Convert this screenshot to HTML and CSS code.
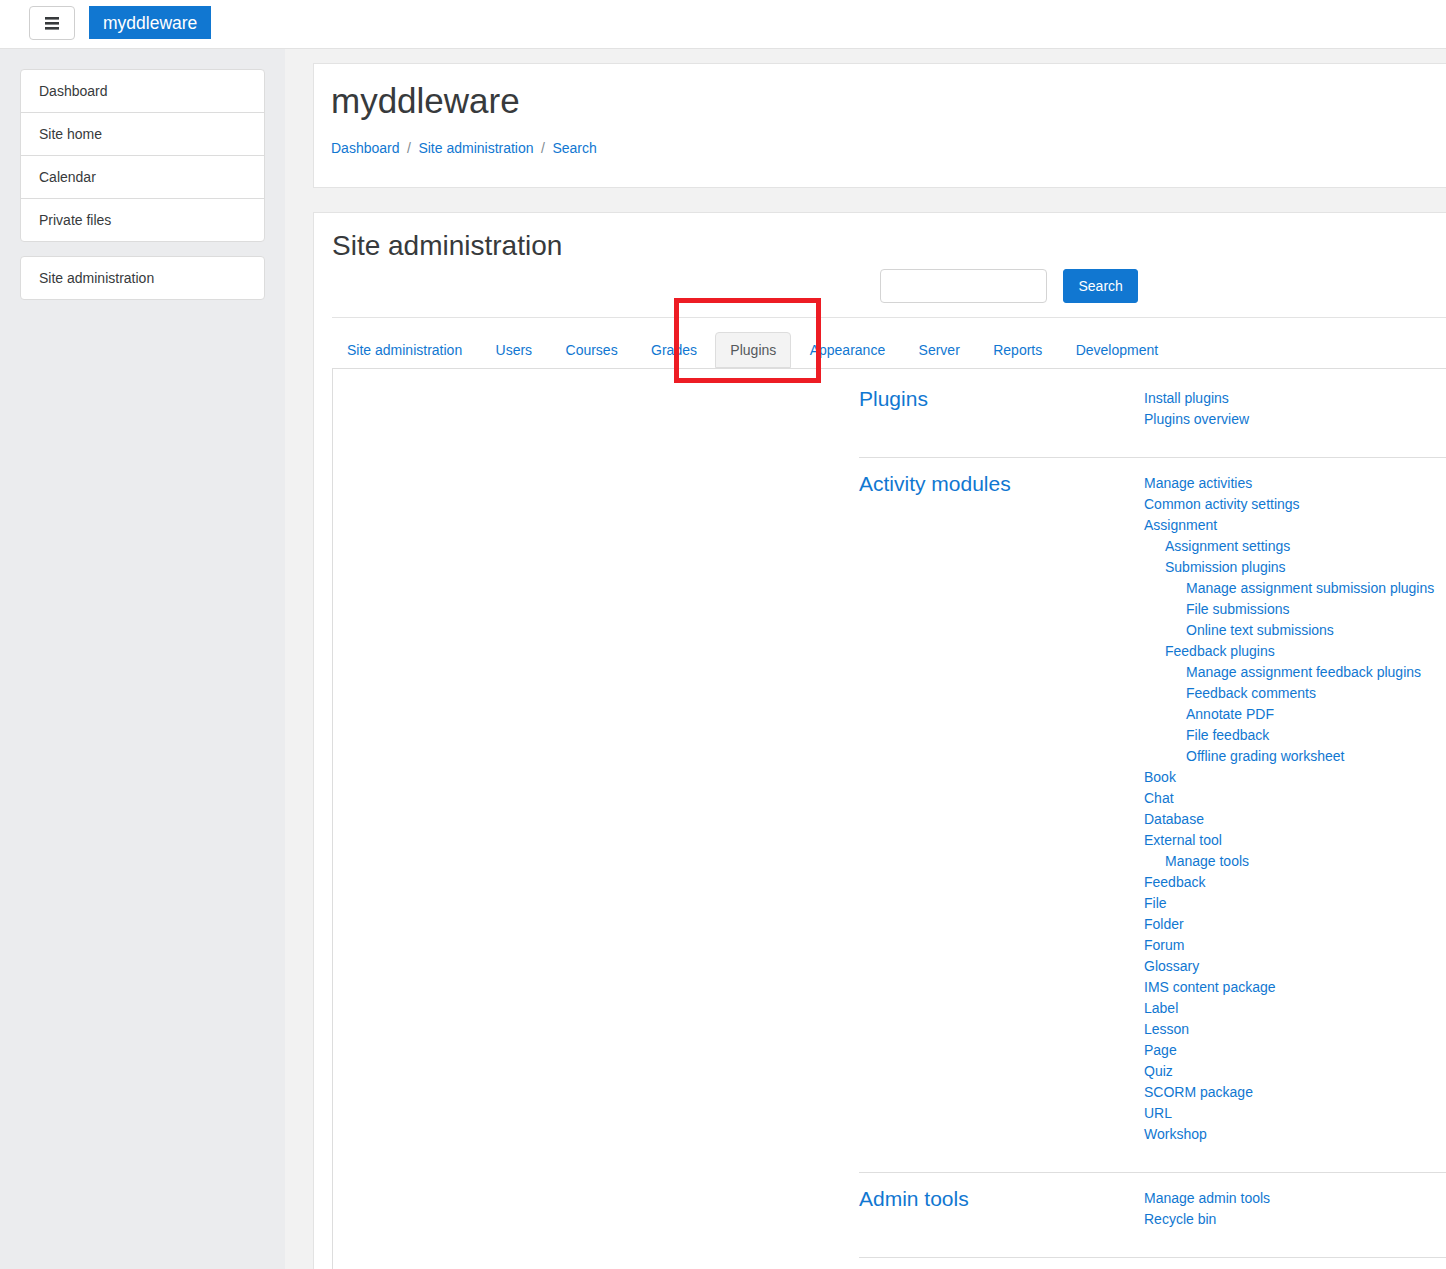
FILE: index.html
```html
<!DOCTYPE html>
<html lang="en">
<head>
<meta charset="utf-8">
<title>myddleware: Administration: Search</title>
<link rel="stylesheet" href="styles.css">
</head>
<body>
<header class="navbar">
  <button class="nav-toggle" type="button" aria-label="Side panel">
    <svg width="14" height="13" viewBox="0 0 14 13" aria-hidden="true">
      <rect x="0" y="0" width="14" height="2.6"></rect>
      <rect x="0" y="5" width="14" height="2.6"></rect>
      <rect x="0" y="10" width="14" height="2.6"></rect>
    </svg>
  </button>
  <a class="brand" href="#">myddleware</a>
</header>

<div class="page">
  <aside class="drawer">
    <nav class="block">
      <a class="block-item" href="#">Dashboard</a>
      <a class="block-item" href="#">Site home</a>
      <a class="block-item" href="#">Calendar</a>
      <a class="block-item" href="#">Private files</a>
    </nav>
    <nav class="block">
      <a class="block-item" href="#">Site administration</a>
    </nav>
  </aside>

  <main class="main">
    <section class="card page-header">
      <h1 class="page-title">myddleware</h1>
      <ol class="breadcrumb">
        <li><a href="#">Dashboard</a></li>
        <li><a href="#">Site administration</a></li>
        <li><a href="#">Search</a></li>
      </ol>
    </section>

    <section class="card admin-card">
      <h2 class="admin-title">Site administration</h2>
      <form class="admin-search">
        <input class="search-input" type="text" aria-label="Search">
        <button class="search-btn" type="button">Search</button>
      </form>
      <hr class="divider">
      <ul class="tabs">
        <li><a class="tab" href="#">Site administration</a></li>
        <li><a class="tab" href="#">Users</a></li>
        <li><a class="tab" href="#">Courses</a></li>
        <li><a class="tab" href="#">Grades</a></li>
        <li><a class="tab active" href="#">Plugins</a></li>
        <li><a class="tab" href="#">Appearance</a></li>
        <li><a class="tab" href="#">Server</a></li>
        <li><a class="tab" href="#">Reports</a></li>
        <li><a class="tab" href="#">Development</a></li>
      </ul>
      <div class="tab-content">
        <div class="settings-row">
          <h3 class="row-title"><a href="#">Plugins</a></h3>
          <ul class="link-list">
            <li><a href="#">Install plugins</a></li>
            <li><a href="#">Plugins overview</a></li>
          </ul>
        </div>
        <div class="settings-row">
          <h3 class="row-title"><a href="#">Activity modules</a></h3>
          <ul class="link-list">
            <li><a href="#">Manage activities</a></li>
            <li><a href="#">Common activity settings</a></li>
            <li><a href="#">Assignment</a>
              <ul>
                <li><a href="#">Assignment settings</a></li>
                <li><a href="#">Submission plugins</a>
                  <ul>
                    <li><a href="#">Manage assignment submission plugins</a></li>
                    <li><a href="#">File submissions</a></li>
                    <li><a href="#">Online text submissions</a></li>
                  </ul>
                </li>
                <li><a href="#">Feedback plugins</a>
                  <ul>
                    <li><a href="#">Manage assignment feedback plugins</a></li>
                    <li><a href="#">Feedback comments</a></li>
                    <li><a href="#">Annotate PDF</a></li>
                    <li><a href="#">File feedback</a></li>
                    <li><a href="#">Offline grading worksheet</a></li>
                  </ul>
                </li>
              </ul>
            </li>
            <li><a href="#">Book</a></li>
            <li><a href="#">Chat</a></li>
            <li><a href="#">Database</a></li>
            <li><a href="#">External tool</a>
              <ul>
                <li><a href="#">Manage tools</a></li>
              </ul>
            </li>
            <li><a href="#">Feedback</a></li>
            <li><a href="#">File</a></li>
            <li><a href="#">Folder</a></li>
            <li><a href="#">Forum</a></li>
            <li><a href="#">Glossary</a></li>
            <li><a href="#">IMS content package</a></li>
            <li><a href="#">Label</a></li>
            <li><a href="#">Lesson</a></li>
            <li><a href="#">Page</a></li>
            <li><a href="#">Quiz</a></li>
            <li><a href="#">SCORM package</a></li>
            <li><a href="#">URL</a></li>
            <li><a href="#">Workshop</a></li>
          </ul>
        </div>
        <div class="settings-row">
          <h3 class="row-title"><a href="#">Admin tools</a></h3>
          <ul class="link-list">
            <li><a href="#">Manage admin tools</a></li>
            <li><a href="#">Recycle bin</a></li>
          </ul>
        </div>
      </div>
    </section>
  </main>
</div>

<div class="annotation" aria-hidden="true"></div>
</body>
</html>
```

FILE: styles.css
```css
* {
  box-sizing: border-box;
}

html,
body {
  margin: 0;
  padding: 0;
}

body {
  position: relative;
  overflow: hidden;
  font-family: "Liberation Sans", Arial, Helvetica, sans-serif;
  font-size: 14px;
  line-height: 20px;
  color: #373a3c;
  background: #f2f2f2;
}

a {
  color: #1177d1;
  text-decoration: none;
}

/* Top navbar */
.navbar {
  display: flex;
  align-items: flex-start;
  height: 49px;
  padding: 6px 0 0 29px;
  background: #fff;
  border-bottom: 1px solid #e2e2e2;
}

.nav-toggle {
  display: flex;
  align-items: center;
  justify-content: center;
  width: 46px;
  height: 34px;
  margin-right: 14px;
  padding: 0;
  background: #fff;
  border: 1px solid #cfcfcf;
  border-radius: 4px;
}

.nav-toggle svg {
  display: block;
  fill: #373a3c;
}

.brand {
  height: 33px;
  padding: 1px 14px 0;
  background: #1177d1;
  color: #fff;
  font-size: 17.5px;
  line-height: 32px;
}

/* Page body */
.page {
  display: flex;
  min-height: 1240px;
}

.drawer {
  flex: none;
  width: 285px;
  padding: 20px 0 0 20px;
  background: #ebecee;
}

.block {
  display: flex;
  flex-direction: column;
  width: 245px;
  margin-bottom: 14px;
  background: #fff;
  border: 1px solid #dcdcdc;
  border-radius: 4px;
}

.block-item {
  display: block;
  padding: 11px 18px;
  color: #373a3c;
  line-height: 20px;
}

.block-item + .block-item {
  border-top: 1px solid #dcdcdc;
}

.main {
  flex: 1;
  min-width: 0;
  padding: 14px 0 0 28px;
}

.card {
  background: #fff;
  border: 1px solid #e3e3e3;
  border-right: none;
}

/* Page header card */
.page-header {
  padding: 16px 17px 29px;
}

.page-title {
  margin: 0;
  font-size: 35px;
  line-height: 42px;
  font-weight: normal;
  color: #373a3c;
}

.breadcrumb {
  display: flex;
  margin: 16px 0 0;
  padding: 0;
  list-style: none;
}

.breadcrumb li + li::before {
  content: "/";
  padding: 0 7.5px;
  color: #818a91;
}

/* Admin card */
.admin-card {
  margin-top: 24px;
  padding: 16px 0 0 18px;
  border-bottom: none;
}

.admin-title {
  margin: 0;
  font-size: 28px;
  line-height: 34px;
  font-weight: normal;
  color: #373a3c;
}

.admin-search {
  display: flex;
  align-items: center;
  margin: 6px 0 0 548px;
}

.search-input {
  width: 167px;
  height: 34px;
  margin: 0 16px 0 0;
  padding: 6px 12px;
  border: 1px solid #d4d4d4;
  border-radius: 4px;
  background: #fff;
  font: inherit;
}

.search-btn {
  height: 34px;
  padding: 0 14.5px;
  border: 1px solid #1177d1;
  border-radius: 3px;
  background: #1177d1;
  color: #fff;
  font: inherit;
  font-size: 14px;
}

.divider {
  height: 0;
  margin: 14px 0;
  border: 0;
  border-top: 1px solid #e3e3e3;
}

/* Tabs */
.tabs {
  display: flex;
  margin: 0;
  padding: 0;
  list-style: none;
  border-bottom: 1px solid #dddddd;
}

.tab {
  display: block;
  margin-right: 3.4px;
  padding: 7px 14px;
  border: 1px solid transparent;
  border-radius: 4px 4px 0 0;
  line-height: 20px;
  white-space: nowrap;
}

.tab.active {
  background: #f3f3f3;
  border-color: #dddddd;
  color: #55595c;
}

.tab-content {
  padding: 4px 0 60px 526px;
  border-left: 1px solid #dddddd;
}

.settings-row {
  display: grid;
  grid-template-columns: 285px 1fr;
  padding: 15px 0 27px;
  border-bottom: 1px solid #dedede;
}

.row-title {
  margin: 0;
  font-size: 21px;
  line-height: 22px;
  font-weight: normal;
}

.link-list,
.link-list ul {
  margin: 0;
  padding: 0;
  list-style: none;
  line-height: 21px;
}

.link-list ul {
  padding-left: 21px;
}

/* Red highlight drawn over the screenshot */
.annotation {
  position: absolute;
  left: 674px;
  top: 298px;
  width: 147px;
  height: 85px;
  border: 5px solid #ed1c24;
  pointer-events: none;
}
```
